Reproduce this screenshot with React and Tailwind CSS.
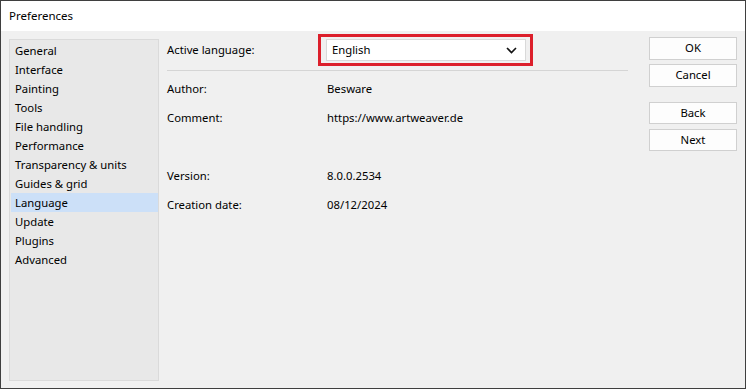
import React from 'react'

const pages = [
  'General',
  'Interface',
  'Painting',
  'Tools',
  'File handling',
  'Performance',
  'Transparency & units',
  'Guides & grid',
  'Language',
  'Update',
  'Plugins',
  'Advanced'
]

const info = [
  { label: 'Author:', value: 'Besware', h: 'h-[29px]' },
  { label: 'Comment:', value: 'https://www.artweaver.de', h: 'h-[29px]' },
  { label: '', value: '', h: 'h-[28px]' },
  { label: 'Version:', value: '8.0.0.2534', h: 'h-[30px]' },
  { label: 'Creation date:', value: '08/12/2024', h: 'h-[29px]' }
]

const DialogButton = ({ children, className = '' }) => (
  <button className={`h-[22px] w-[88px] border border-[#d0d0d0] bg-[#fdfdfd] text-[11.3px] text-black ${className}`}>
    {children}
  </button>
)

const App = () => {
  return (
    <div
      className="w-[746px] h-[389px] border border-[#3f3f3f] bg-[#f0f0f0] flex flex-col text-black"
      style={{ fontFamily: '"Segoe UI", "Noto Sans", sans-serif' }}
    >
      {/* Title bar */}
      <div className="h-[30px] bg-white flex items-center pl-[8px] text-[11.5px] shrink-0">
        Preferences
      </div>

      <div className="flex-1 flex pt-[8px] pb-[7px] pl-[8px]">
        {/* Page list */}
        <div className="w-[150px] border border-[#dadada] bg-[#e8e8e8] pt-[1px] pl-[1px]">
          {pages.map((page) => (
            <div
              key={page}
              className={`h-[19px] leading-[19px] pl-[4px] text-[11.3px] ${
                page === 'Language' ? 'bg-[#cce0f8]' : ''
              }`}
            >
              {page}
            </div>
          ))}
        </div>

        {/* Content */}
        <div className="w-[461px] ml-[8px] text-[11.3px]">
          <div className="flex items-center h-[34px] mt-[-6px]">
            <div className="w-[151px]">Active language:</div>
            <div className="border-[3px] border-[#dc1f2b] pl-[5px] pr-[4px] py-[2px]">
              <div className="w-[200px] h-[22px] bg-white border border-[#d9d9d9] flex items-center justify-between pl-[5px] pr-[8px]">
                <span>English</span>
                <svg width="11" height="7" viewBox="0 0 11 7" fill="none">
                  <path d="M1 1 L5.5 5.5 L10 1" stroke="#111" strokeWidth="1.6" />
                </svg>
              </div>
            </div>
          </div>

          <div className="h-px bg-[#d5d5d5] mt-[3px]" />

          <div className="pt-[4px]">
            {info.map((row, i) => (
              <div key={i} className={`grid grid-cols-[160px_1fr] items-center ${row.h}`}>
                <div>{row.label}</div>
                <div>{row.value}</div>
              </div>
            ))}
          </div>
        </div>

        {/* Buttons */}
        <div className="ml-[21px] flex flex-col mt-[-2px]">
          <DialogButton className="h-[23px]">OK</DialogButton>
          <DialogButton className="mt-[4px] h-[23px]">Cancel</DialogButton>
          <DialogButton className="mt-[15px] h-[22px]">Back</DialogButton>
          <DialogButton className="mt-[5px] h-[22px]">Next</DialogButton>
        </div>
      </div>
    </div>
  )
}

export default App
